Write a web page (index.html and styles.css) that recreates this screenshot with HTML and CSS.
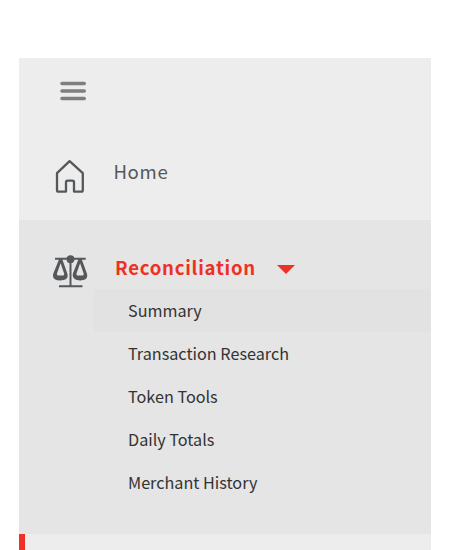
FILE: index.html
```html
<!DOCTYPE html>
<html lang="en">
<head>
<meta charset="utf-8">
<title>Navigation</title>
<link rel="stylesheet" href="styles.css">
</head>
<body>
<nav class="sidebar">
  <div class="top">
    <svg class="menu" viewBox="0 0 28 22" aria-hidden="true"><path d="M3 3.5H25.2M3 11H25.2M3 18.5H25.2"/></svg>
  </div>
  <a class="item home">
    <svg class="icon" viewBox="0 0 36 38" aria-hidden="true"><path class="line" d="M5 15.2 17.6 3.2 30.8 15.2V31.9Q30.8 33.6 29.3 33.6H22V24.3Q22 22.7 20.4 22.7H15.6Q14 22.7 14 24.3V33.6H6.5Q5 33.6 5 31.9Z"/></svg>
    <span class="label">Home</span>
  </a>
  <section class="group">
    <a class="item open">
      <svg class="icon" viewBox="0 0 36 38" aria-hidden="true">
        <path class="beam" d="M3 6.7H33.7M18.5 5V34M7 34.3H30.5"/>
        <circle cx="18.5" cy="7.2" r="3.9"/>
        <path fill-rule="evenodd" d="M7.2 7H10.2L15.3 21.5Q17.4 28.4 8.4 28.4T1.3 21.5ZM8.6 11.2 5 21.6Q4.7 23.6 6.4 23.6H10.8Q12.5 23.6 12.1 21.6Z"/>
        <path fill-rule="evenodd" d="M26.6 7H29.6L34.9 21.5Q36.9 28.4 28.2 28.4T20.9 21.5ZM28.1 11.2 24.5 21.6Q24.2 23.6 25.9 23.6H30.3Q32 23.6 31.6 21.6Z"/>
      </svg>
      <span class="label">Reconciliation</span>
      <svg class="caret" viewBox="0 0 18 9" aria-hidden="true"><path d="M0 0H18L9 9Z"/></svg>
    </a>
    <ul class="sub">
      <li class="current">Summary</li>
      <li>Transaction Research</li>
      <li>Token Tools</li>
      <li>Daily Totals</li>
      <li>Merchant History</li>
    </ul>
  </section>
  <div class="next"></div>
</nav>
</body>
</html>
```

FILE: styles.css
```css
body {
  margin: 0;
  background: #fff;
  overflow: hidden;
  font-family: "Noto Sans CJK SC", "Noto Sans", sans-serif;
}
.sidebar {
  width: 412px;
  height: 492px;
  margin: 58px 0 0 19px;
  background: #ededed;
  overflow: hidden;
}
.top {
  height: 78px;
  padding: 22px 0 0 40px;
  box-sizing: border-box;
}
.menu {
  display: block;
  width: 28px;
  height: 22px;
  fill: none;
  stroke: #7e7e7e;
  stroke-width: 3.6;
  stroke-linecap: round;
}
.item {
  display: flex;
  height: 69px;
  padding-left: 33px;
  box-sizing: border-box;
}
.home {
  height: 84px;
  padding-top: 22px;
}
.icon {
  width: 36px;
  height: 38px;
  flex: none;
  fill: #54585a;
}
.line {
  fill: none;
  stroke: #54585a;
  stroke-width: 2.3;
  stroke-linejoin: round;
}
.beam {
  fill: none;
  stroke: #54585a;
  stroke-width: 2;
}
.label {
  margin-left: 25.4px;
  font-size: 18.6px;
  line-height: 26px;
  letter-spacing: 0.68px;
  color: #54585a;
}
.group {
  height: 314px;
  background: #e5e5e5;
}
.open {
  padding-top: 32px;
}
.open .label {
  margin-left: 27px;
  line-height: 30px;
  font-weight: 700;
  letter-spacing: 0.73px;
  color: #ee3124;
}
.caret {
  width: 18px;
  height: 9px;
  margin: 13px 0 0 21px;
  fill: #ee3124;
}
.sub {
  list-style: none;
  margin: 0 0 0 75px;
  padding: 0;
}
.sub li {
  height: 43px;
  padding-left: 34px;
  font-size: 16.2px;
  line-height: 42px;
  color: #333;
}
.sub .current {
  background: #e2e2e2;
}
.next {
  height: 16px;
  border-left: 6px solid #ee3124;
}
```
